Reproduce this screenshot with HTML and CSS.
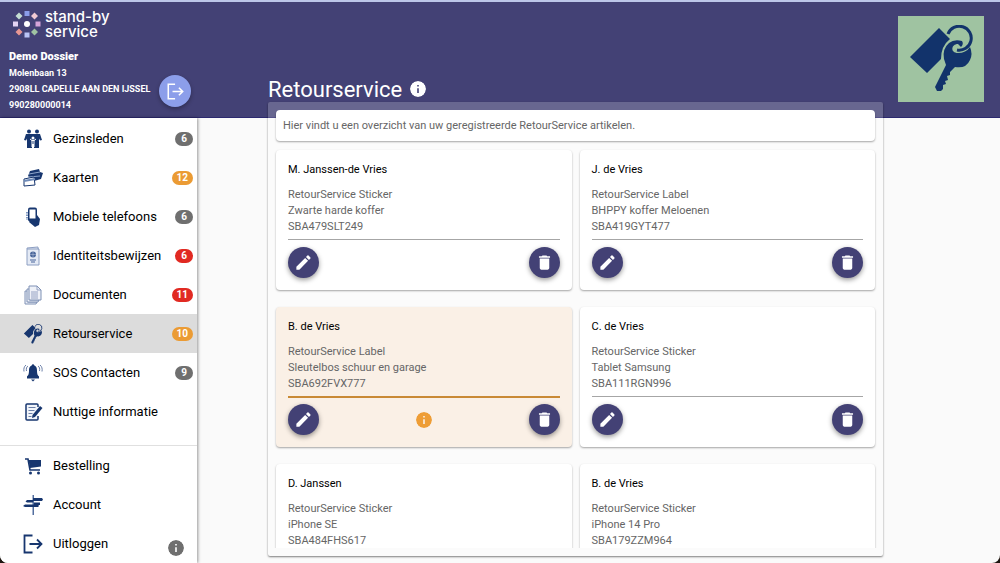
FILE: index.html
```html
<!DOCTYPE html>
<html lang="nl">
<head>
  <meta charset="UTF-8">
  <meta name="viewport" content="width=device-width, initial-scale=1.0">
  <title>Retourservice</title>
  <link rel="stylesheet" href="styles.css">
</head>
<body>
<!-- Gedeelde iconen -->
<svg class="sprite" aria-hidden="true">
  <symbol id="i-edit" viewBox="0 0 24 24"><path d="M3 17.25V21h3.75L17.81 9.94l-3.75-3.75L3 17.25zM20.71 7.04a1 1 0 0 0 0-1.41l-2.34-2.34a1 1 0 0 0-1.41 0l-1.83 1.83 3.75 3.75 1.83-1.83z"/></symbol>
  <symbol id="i-delete" viewBox="0 0 24 24"><path d="M6 19c0 1.100.9 2 2 2h8c1.100 0 2-.9 2-2V7H6v12zM19 4h-3.500l-1-1h-5l-1 1H5v2h14V4z"/></symbol>
  <symbol id="i-info" viewBox="2 2 20 20"><path d="M12 2a10 10 0 1 0 0 20 10 10 0 0 0 0-20zm1 15h-2v-6h2v6zm0-8h-2V7h2v2z"/></symbol>
  <symbol id="i-logout" viewBox="0 0 20 20"><path d="M9.500 1.500H1.500v17h8M6.500 10h12M14 5.500l4.500 4.500-4.500 4.500" fill="none" stroke="currentColor" stroke-width="1.800"/></symbol>
  <symbol id="i-keys" viewBox="8 12 66 68">
    <path d="M39 15 50 26Q41 33 41 46L27 60 10 44z"/>
    <path d="M48 21A12 12 0 1 1 57 37" fill="none" stroke="currentColor" stroke-width="3"/>
    <path d="M62 28Q54 26 49 30 42 36 44 46L46 52 35 74 37 78 41 78 43 76 43 72 46 71 45 68 48 67 47 63 50 62 50 59 55 54Q66 56 70 47 73 41 70 34 66 40 58 40C50 40 51 31 58 31L61 34Q64 31 62 28z"/>
  </symbol>
</svg>

<div class="app">
  <header class="topbar">
    <div class="brand">
      <div class="logo">
        <svg width="28" height="28" viewBox="0 0 28 28" aria-hidden="true">
          <circle cx="14" cy="14" r="3" fill="#fff"/>
          <path d="M11.500 1h5v5h-5z" fill="#8b9de9"/>
          <path d="M0 11.500h5v5H0z" fill="#e3d3f3"/>
          <path d="M22.500 11.500h5v5h-5z" fill="#d5a4d9"/>
          <path d="M11.500 22.500h5v5h-5z" fill="#bac4f5"/>
          <path d="M6 2.500 9.500 6 6 9.500 2.500 6z" fill="#c4ddd2"/>
          <path d="M21.500 2.500 25 6l-3.500 3.500L18 6z" fill="#f0c9d2"/>
          <path d="M6 18.500 9.500 22 6 25.500 2.500 22z" fill="#e99793"/>
          <path d="M21.500 18.500 25 22l-3.500 3.500L18 22z" fill="#9fc3a2"/>
        </svg>
        <span>stand-by<br>service</span>
      </div>
      <div class="dossier">
        <div>
          <strong class="dossier-name">Demo Dossier</strong>
          <address>Molenbaan 13<br>2908LL CAPELLE AAN DEN IJSSEL<br>990280000014</address>
        </div>
        <button class="leave" aria-label="Dossier verlaten"><svg width="17" height="17"><use href="#i-logout"/></svg></button>
      </div>
    </div>
    <div class="heading">
      <h1>Retourservice</h1>
      <button class="info" aria-label="Informatie"><svg width="16" height="16"><use href="#i-info"/></svg></button>
    </div>
    <div class="emblem"><svg width="66" height="68"><use href="#i-keys"/></svg></div>
  </header>

  <div class="page">
    <nav class="sidebar">
      <ul class="menu">
        <li><a href="#">
          <svg class="icon" viewBox="0 0 20 20"><circle cx="6" cy="2.500" r="2"/><circle cx="14" cy="2.500" r="2"/><path d="M3 5h14l2 6-2 .5-1-2V19h-5v-4H9v4H4V9.500l-1 2L1 11z"/><circle cx="10" cy="9" r="1.500" fill="#fff"/><path d="m7 10 2 1.500h2l2-1.500M9 11v7M11 11v7" fill="none" stroke="#fff"/></svg>
          <span>Gezinsleden</span><b class="badge">6</b></a></li>
        <li><a href="#">
          <svg class="icon" viewBox="0 0 20 20"><path d="m7 3 9-2 1 3 3 1-2 6-7 2-6-5z"/><path d="M6 6 17 4M5 9l12-1" stroke="#8fa6cb"/><path d="m1 11 10-2 1 8-11 1z" fill="#fff" stroke="currentColor"/><path d="m1 13 11-2" stroke="#6f8bb8" stroke-width="2"/></svg>
          <span>Kaarten</span><b class="badge orange">12</b></a></li>
        <li><a href="#">
          <svg class="icon" viewBox="0 0 20 20"><path d="m14 8 3 4-1 6-4 2-6-5 2-3z"/><rect x="5" y=".5" width="9" height="14" rx="2"/><path d="M6.500 2.500h6v9h-6z" fill="#fff"/><path d="M4 5v8" stroke="#7f97c0" stroke-width="2" stroke-dasharray="1.500 1"/></svg>
          <span>Mobiele telefoons</span><b class="badge">6</b></a></li>
        <li><a href="#">
          <svg class="icon" viewBox="0 0 20 20"><path d="m4 2 11-1v2h1v16H4z" fill="#e4eaf5" stroke="#8d9fc2"/><path d="M4 3h12" stroke="#8d9fc2"/><circle cx="10" cy="8.500" r="3" fill="#48659b"/><path d="M7 8.500h6M10 5.500v6" stroke="#bdc9df" stroke-width=".5"/><path d="M7 14h6M8 16h4" stroke="#48659b"/></svg>
          <span>Identiteitsbewijzen</span><b class="badge red">6</b></a></li>
        <li><a href="#">
          <svg class="icon" viewBox="0 0 20 20"><g fill="#eef1f8" stroke="#7f91b5"><path d="M2 6v13h11l1-2H5V6z"/><path d="M4 4v13h11l1-2H7V4z"/><path d="M6 1h8l4 4v10H6z"/></g><path d="M14 1v4h4M8 7h7M8 9h7M8 11h7M8 13h7" fill="none" stroke="#7f91b5" stroke-width=".8"/></svg>
          <span>Documenten</span><b class="badge red">11</b></a></li>
        <li><a href="#" class="active" aria-current="page">
          <svg class="icon"><use href="#i-keys"/></svg>
          <span>Retourservice</span><b class="badge orange">10</b></a></li>
        <li><a href="#">
          <svg class="icon" viewBox="0 0 20 20"><path d="M10 2.500c3 0 4 2 4 5 0 4 1 5 2 6v2H4v-2c1-1 2-2 2-6 0-3 1-5 4-5z"/><circle cx="10" cy="2.500" r="1.200"/><path d="M8 16.500h4l-2 2z"/><path d="M5 3C3.500 4 3 5.500 3.500 8M3 2C1 3.500.5 6 1 8.500M15 3c1.500 1 2 2.500 1.500 5M17 2c2 1.500 2.500 4 2 6.500" fill="none" stroke="#6b7fa8"/></svg>
          <span>SOS Contacten</span><b class="badge">9</b></a></li>
        <li><a href="#">
          <svg class="icon" viewBox="0 0 20 20"><path d="M15 5V3q0-1-1-1H4Q3 2 3 3v14q0 1 1 1h10q1 0 1-1v-3" fill="#f2f5fa" stroke="currentColor" stroke-width="1.500"/><path d="M5.500 5.500h7M5.500 8.500h6M5.500 11.500h4M5.500 14.500h3" stroke="#6b7fa8"/><path d="m17 4 2.500 2-7.500 9-3 1 .5-3z"/></svg>
          <span>Nuttige informatie</span></a></li>
      </ul>
      <ul class="menu secondary">
        <li><a href="#">
          <svg class="icon" viewBox="0 0 20 20"><path d="M2 3h3l2 11h10" fill="none" stroke="currentColor" stroke-width="1.600"/><path d="M5.500 4H18v6.500L7 12z"/><circle cx="7.500" cy="17" r="1.500"/><circle cx="15.500" cy="17" r="1.500"/></svg>
          <span>Bestelling</span></a></li>
        <li><a href="#">
          <svg class="icon" viewBox="0 0 20 20"><path d="M9.500 0h1.500v20H9.500z" fill="#536f9f"/><path d="M10 3h9l1 1.500-1 1.500h-9zM4 5h6v2.500H4L2.500 6.500zM11 7.500h6v2.500h-6zM2 9.500h13l1 1.500-1 1H2L0 11z"/></svg>
          <span>Account</span></a></li>
        <li><a href="#">
          <svg class="icon" viewBox="0 0 20 20"><use href="#i-logout"/></svg>
          <span>Uitloggen</span></a>
          <button class="info menu-info" aria-label="Over deze applicatie"><svg width="16" height="16"><use href="#i-info"/></svg></button></li>
      </ul>
    </nav>

    <main class="content">
      <div class="panel">
        <div class="scroll">
          <p class="intro">Hier vindt u een overzicht van uw geregistreerde RetourService artikelen.</p>
          <div class="cards">
            <article class="card">
              <h2>M. Janssen-de Vries</h2>
              <p>RetourService Sticker<br>Zwarte harde koffer<br>SBA479SLT249</p>
              <div class="actions">
                <button class="round" aria-label="Bewerken"><svg width="19" height="19"><use href="#i-edit"/></svg></button>
                <button class="round" aria-label="Verwijderen"><svg width="19" height="19"><use href="#i-delete"/></svg></button>
              </div>
            </article>
            <article class="card">
              <h2>J. de Vries</h2>
              <p>RetourService Label<br>BHPPY koffer Meloenen<br>SBA419GYT477</p>
              <div class="actions">
                <button class="round" aria-label="Bewerken"><svg width="19" height="19"><use href="#i-edit"/></svg></button>
                <button class="round" aria-label="Verwijderen"><svg width="19" height="19"><use href="#i-delete"/></svg></button>
              </div>
            </article>
            <article class="card warning">
              <h2>B. de Vries</h2>
              <p>RetourService Label<br>Sleutelbos schuur en garage<br>SBA692FVX777</p>
              <div class="actions">
                <button class="round" aria-label="Bewerken"><svg width="19" height="19"><use href="#i-edit"/></svg></button>
                <button class="info" aria-label="Let op"><svg width="16" height="16"><use href="#i-info"/></svg></button>
                <button class="round" aria-label="Verwijderen"><svg width="19" height="19"><use href="#i-delete"/></svg></button>
              </div>
            </article>
            <article class="card">
              <h2>C. de Vries</h2>
              <p>RetourService Sticker<br>Tablet Samsung<br>SBA111RGN996</p>
              <div class="actions">
                <button class="round" aria-label="Bewerken"><svg width="19" height="19"><use href="#i-edit"/></svg></button>
                <button class="round" aria-label="Verwijderen"><svg width="19" height="19"><use href="#i-delete"/></svg></button>
              </div>
            </article>
            <article class="card">
              <h2>D. Janssen</h2>
              <p>RetourService Sticker<br>iPhone SE<br>SBA484FHS617</p>
            </article>
            <article class="card">
              <h2>B. de Vries</h2>
              <p>RetourService Sticker<br>iPhone 14 Pro<br>SBA179ZZM964</p>
            </article>
          </div>
        </div>
      </div>
    </main>
  </div>
</div>
</body>
</html>
```
FILE: styles.css
```css
* { box-sizing: border-box; }
html { background: #1e1610; }
body {
  margin: 0;
  font-family: Roboto, "Liberation Sans", sans-serif;
  font-size: 11px;
  line-height: 16px;
  color: #000;
}
h1, h2, p, ul { margin: 0; padding: 0; }
ul { list-style: none; }
svg { display: block; fill: currentColor; }
button {
  display: flex;
  align-items: center;
  justify-content: center;
  padding: 0;
  border: none;
  background: none;
  color: inherit;
  cursor: pointer;
}
.sprite { position: absolute; width: 0; height: 0; }

.app {
  display: flex;
  flex-direction: column;
  height: 100vh;
  overflow: hidden;
  background: #fafafa;
  border-radius: 0 0 8px 8px;
}

/* Header */
.topbar {
  flex: none;
  display: flex;
  height: 118px;
  border-top: 2px solid #bcc6e8;
  border-bottom: 1px solid #2c2970;
  background: #434175;
  color: #fff;
}
.brand {
  flex: none;
  width: 197px;
  padding: 7px 6px 0 9px;
}
.logo {
  display: flex;
  align-items: center;
  gap: 4px;
  padding-left: 4px;
  font-family: Inter, sans-serif;
  font-size: 15px;
  font-weight: 500;
  line-height: 15px;
}
.dossier {
  display: flex;
  justify-content: space-between;
  align-items: flex-end;
  padding-top: 10px;
  font-weight: 700;
}
.dossier-name { font-size: 11px; }
address {
  font-size: 9px;
  font-style: normal;
  white-space: nowrap;
}
.leave {
  flex: none;
  width: 32px;
  height: 32px;
  margin-bottom: 6px;
  border-radius: 50%;
  background: #8c9eea;
  box-shadow: 0 2px 4px rgba(0, 0, 0, .3);
}
.heading {
  flex: 1;
  display: flex;
  align-items: flex-end;
  gap: 8px;
  padding: 0 0 15px 71px;
}
h1 {
  font-size: 22px;
  font-weight: 400;
  line-height: 24px;
}
.heading .info { margin-bottom: 5px; }
.info svg { border-radius: 50%; }
.emblem {
  flex: none;
  display: flex;
  align-items: center;
  justify-content: center;
  width: 86px;
  height: 86px;
  margin: 14px 16px 0 0;
  background: #9fc3a1;
  color: #12336b;
}

.page {
  flex: 1;
  display: flex;
  min-height: 0;
}

/* Menu */
.sidebar {
  flex: none;
  width: 197px;
  padding-top: 1px;
  background: #fff;
  box-shadow: 1px 0 3px rgba(0, 0, 0, .4);
}
.menu li {
  position: relative;
}
.menu a {
  display: flex;
  align-items: center;
  height: 39px;
  padding: 0 4px 0 23px;
  color: inherit;
  font-size: 13px;
  text-decoration: none;
}
.menu a span { flex: 1; white-space: nowrap; }
.menu a.active { background: #dcdcdc; }
.menu .icon {
  width: 20px;
  height: 20px;
  margin-right: 10px;
  color: #17366f;
}
.badge {
  min-width: 18px;
  padding: 0 5px;
  border-radius: 7px;
  background: #6f6f6f;
  color: #fff;
  font-size: 10px;
  line-height: 14px;
  text-align: center;
}
.orange { background: #eb9b34; }
.red { background: #e12a22; }
.secondary {
  margin-top: 14px;
  border-top: 1px solid #e0e0e0;
}
.menu-info {
  position: absolute;
  right: 13px;
  bottom: 7px;
  color: #6f6f6f;
}

/* Inhoud */
.content {
  flex: 1;
  display: flex;
  min-width: 0;
  margin-top: -16px;
  padding: 0 117px 7px 71px;
}
.panel {
  flex: 1;
  display: flex;
  padding: 8px 0;
  border-radius: 2px;
  background: rgba(255, 255, 255, .2);
  box-shadow: 0 1px 2px rgba(0, 0, 0, .5);
}
.scroll {
  flex: 1;
  padding: 0 8px;
  overflow-y: auto;
  scrollbar-width: none;
}
.intro, .card {
  border-radius: 4px;
  background: #fff;
  box-shadow: 0 1px 2px rgba(0, 0, 0, .35);
}
.intro {
  padding: 8px 7px 7px;
  color: #666;
}
.cards {
  display: grid;
  grid-template-columns: 1fr 1fr;
  gap: 17px 8px;
  margin-top: 9px;
}
.card {
  min-height: 140px;
  padding: 12px;
}
.card h2 {
  margin-bottom: 9px;
  font-size: 11px;
  font-weight: 400;
}
.card p { color: #666; }
.actions {
  display: flex;
  align-items: center;
  justify-content: space-between;
  margin-top: 4px;
  padding-top: 7px;
  border-top: 1px solid #a6a6a6;
}
.round {
  width: 31px;
  height: 31px;
  border-radius: 50%;
  background: #434175;
  color: #fff;
  box-shadow: 0 2px 5px rgba(0, 0, 0, .4);
}
.warning { background: #faf0e6; }
.warning .actions {
  padding-top: 6px;
  border-top: 2px solid #c98a35;
}
.warning .info { color: #ee9d35; }
```
